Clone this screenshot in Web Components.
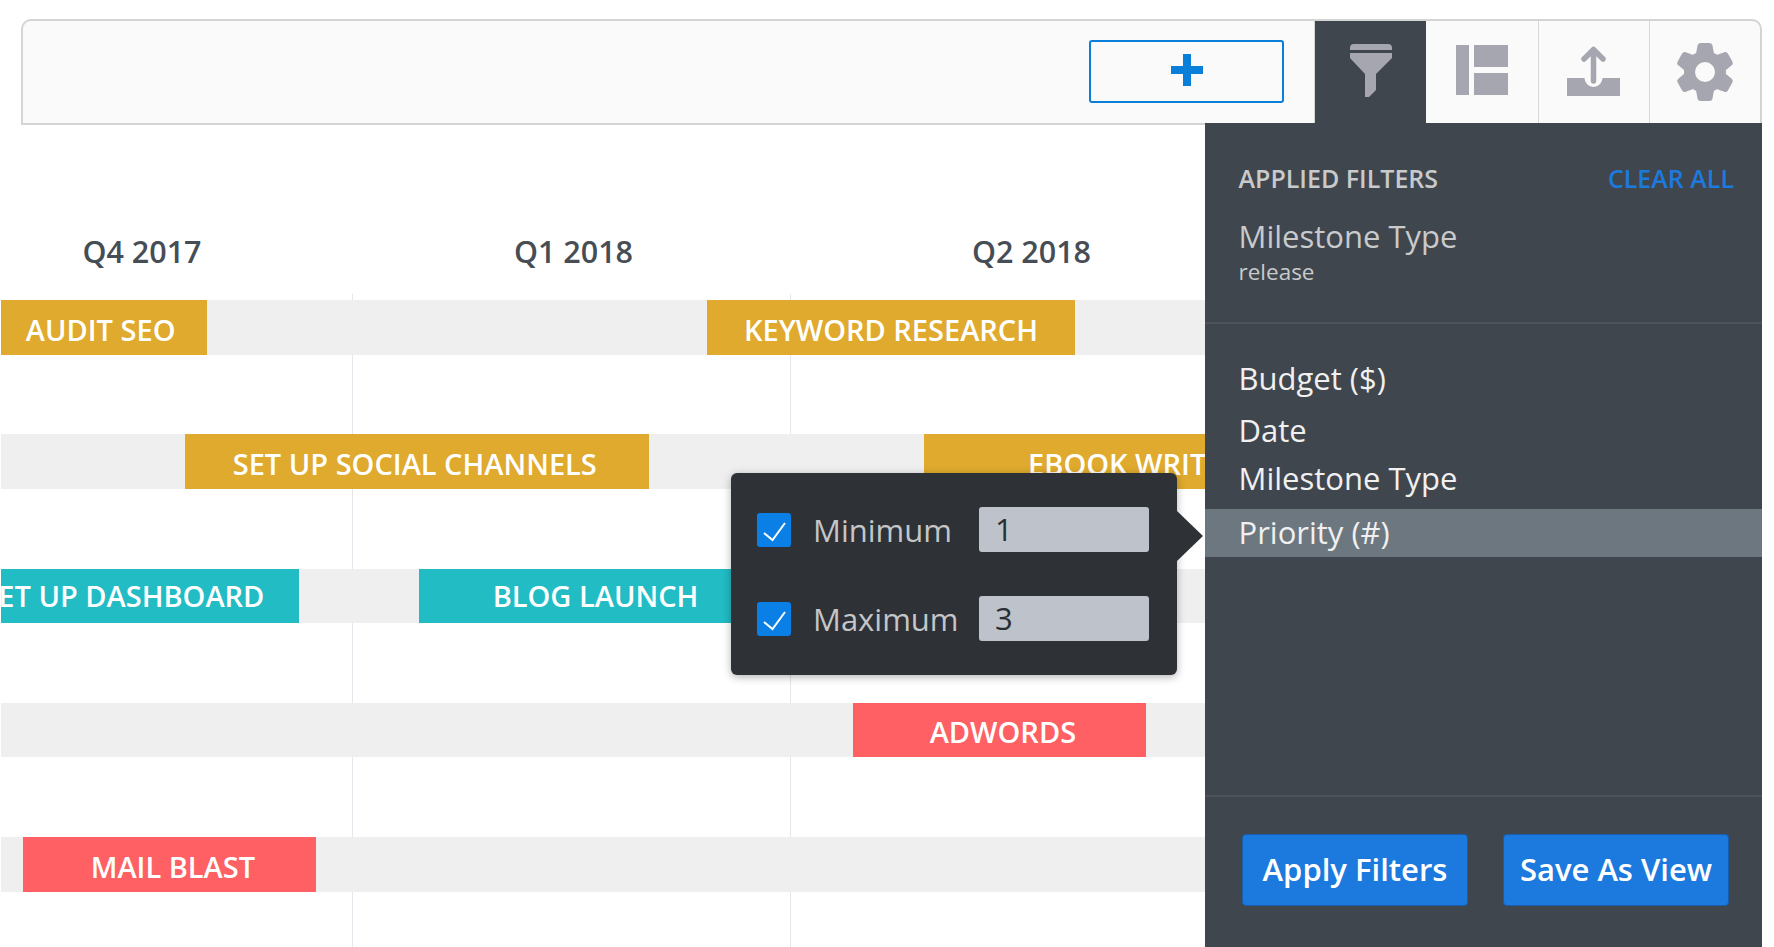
<!DOCTYPE html>
<html>
<head>
<meta charset="utf-8">
<title>Roadmap</title>
<style>
  html, body { margin: 0; height: 100%; background: #fff; overflow: hidden; }
  body { font-family: "Open Sans", sans-serif; }
</style>
</head>
<body>
<roadmap-app>
  <app-toolbar slot="toolbar">
    <tool-tab active style="width:112.25px">
      <svg width="42" height="53" viewBox="0 0 42 53" style="margin-bottom:3px"><path fill="#a6a6b0" d="M0 6V4Q0 0 4 0H38Q42 0 42 4V6ZM0 9H42V14L26 30V46L19 53H15V30L0 14Z"/></svg>
    </tool-tab>
    <tool-tab plain>
      <svg width="52" height="50" viewBox="0 0 52 50" style="margin-bottom:4px"><path fill="#a6a6b0" d="M0 0H13V50H0ZM18 0H52V22H18ZM18 28H52V50H18Z"/></svg>
    </tool-tab>
    <tool-tab>
      <svg width="53" height="50" viewBox="0 0 53 50" style="margin-bottom:2px"><path fill="#a6a6b0" d="M0 32H17.500A9 9 0 0 0 35.500 32H53V50H0Z"/><path fill="none" stroke="#a6a6b0" stroke-width="5.500" stroke-linecap="round" stroke-linejoin="round" d="M26.500 35V4M17 13L26.500 3.500L36 13"/></svg>
    </tool-tab>
    <tool-tab>
      <svg width="60" height="60" viewBox="-30 -30 60 60" style="margin-left:1px">
        <g fill="#a6a6b0">
          <circle r="21"/>
          <path id="t" d="M-9-18L-7.500-26.500Q-7-29-4.500-29H4.500Q7-29 7.500-26.500L9-18Z"/>
          <use href="#t" transform="rotate(60)"/><use href="#t" transform="rotate(120)"/><use href="#t" transform="rotate(180)"/><use href="#t" transform="rotate(240)"/><use href="#t" transform="rotate(300)"/>
        </g>
        <circle r="10" fill="#fafafa"/>
      </svg>
    </tool-tab>
  </app-toolbar>

  <time-line slot="timeline">
    <time-row>
      <time-bar color="#dfaa2d" start="1" end="207" dx="-3" dy="2">AUDIT SEO</time-bar>
      <time-bar color="#dfaa2d" start="707" end="1075" dy="2">KEYWORD RESEARCH</time-bar>
    </time-row>
    <time-row>
      <time-bar color="#dfaa2d" start="185" end="649" dx="-2" dy="2">SET UP SOCIAL CHANNELS</time-bar>
      <time-bar color="#dfaa2d" start="924" end="1363" dy="2">EBOOK WRITING</time-bar>
    </time-row>
    <time-row>
      <time-bar color="#22bcc5" start="-59" end="299" dx="3">SET UP DASHBOARD</time-bar>
      <time-bar color="#22bcc5" start="419" end="772">BLOG LAUNCH</time-bar>
    </time-row>
    <time-row>
      <time-bar color="#fe6063" start="853" end="1146" dx="3" dy="1">ADWORDS</time-bar>
    </time-row>
    <time-row>
      <time-bar color="#fe6063" start="23" end="316" dx="3" dy="2">MAIL BLAST</time-bar>
    </time-row>
    <range-popover slot="over">
      <range-row label="Minimum" value="1"></range-row>
      <range-row label="Maximum" value="3" style="margin-top:44px"></range-row>
    </range-popover>
  </time-line>

  <filter-panel slot="panel">
    <filter-item style="margin-top:30px">Budget ($)</filter-item>
    <filter-item style="margin-top:4px">Date</filter-item>
    <filter-item>Milestone Type</filter-item>
    <filter-item selected style="margin-top:7px">Priority (#)</filter-item>
  </filter-panel>
</roadmap-app>

<script>
class RoadmapApp extends HTMLElement {
  constructor() {
    super();
    this.attachShadow({ mode: "open" }).innerHTML = `
      <style>
        :host { display: flex; flex-direction: column; height: 947px; }
        .body { display: flex; flex: 1; min-height: 0; }
      </style>
      <slot name="toolbar"></slot>
      <div class="body">
        <slot name="timeline"></slot>
        <slot name="panel"></slot>
      </div>`;
  }
}

class AppToolbar extends HTMLElement {
  constructor() {
    super();
    this.attachShadow({ mode: "open" }).innerHTML = `
      <style>
        :host {
          display: flex; box-sizing: border-box; height: 106px; flex: none;
          margin: 19px 12px 0 21px;
          border: 2px solid #d4d4d4; border-radius: 10px 10px 0 0;
          background: #fafafa; justify-content: flex-end;
        }
        .add {
          box-sizing: border-box; width: 195px; height: 63px; margin: 19px 30px 0 0;
          border: 2px solid #0a7fd9; border-radius: 3px;
          display: flex; align-items: center; justify-content: center; padding-bottom: 3px;
        }
      </style>
      <div class="add">
        <svg width="32" height="32" viewBox="0 0 32 32"><path fill="#0a7fd9" d="M12 0H20V12H32V20H20V32H12V20H0V12H12Z"/></svg>
      </div>
      <slot></slot>`;
  }
}

class ToolTab extends HTMLElement {
  constructor() {
    super();
    this.attachShadow({ mode: "open" }).innerHTML = `
      <style>
        :host {
          display: flex; align-items: center; justify-content: center;
          box-sizing: border-box; width: 111.25px; height: 102px;
          border-left: 1px solid #d8d8d8;
        }
        :host([active]) { background: #40464d; border-left-color: #d4d4d4; }
        :host([plain]) { border-left-color: transparent; }
      </style>
      <slot></slot>`;
  }
}

class TimeLine extends HTMLElement {
  constructor() {
    super();
    this.attachShadow({ mode: "open" }).innerHTML = `
      <style>
        :host {
          display: block; position: relative; flex: none; width: 1205px; overflow: hidden;
          background:
            linear-gradient(#e4e6ec, #e4e6ec) 352px 169px / 1px 100% no-repeat,
            linear-gradient(#e4e6ec, #e4e6ec) 790px 169px / 1px 100% no-repeat;
        }
        .quarters {
          display: grid; grid-template-columns: 284px 579px 337px;
          height: 175px; box-sizing: border-box; padding-top: 103px;
          font: 600 30.5px/46px "Open Sans", sans-serif; color: #464d55; text-align: center;
        }
        .rows { display: flex; flex-direction: column; gap: 79.75px; }
        .over { position: absolute; left: 731px; top: 348px; }
      </style>
      <div class="quarters"><div>Q4 2017</div><div>Q1 2018</div><div>Q2 2018</div></div>
      <div class="rows"><slot></slot></div>
      <div class="over"><slot name="over"></slot></div>`;
  }
}

class TimeRow extends HTMLElement {
  constructor() {
    super();
    this.attachShadow({ mode: "open" }).innerHTML = `
      <style>
        :host { display: flex; height: 54.5px; margin-left: 1px; background: #efefef; overflow: hidden; }
      </style>
      <slot></slot>`;
  }
}

class TimeBar extends HTMLElement {
  constructor() {
    super();
    this.attachShadow({ mode: "open" }).innerHTML = `
      <style>
        :host {
          display: flex; flex: none; align-items: center; justify-content: center; box-sizing: border-box;
          font: 600 29px "Open Sans", sans-serif; color: #fff; white-space: nowrap;
        }
      </style>
      <slot></slot>`;
  }
  connectedCallback() {
    // start/end are page x; margin is the distance from the previous bar's end
    const start = +this.getAttribute("start");
    const end = +this.getAttribute("end");
    const dx = +this.getAttribute("dx");
    const dy = +this.getAttribute("dy");
    const prev = this.previousElementSibling;
    const from = prev ? +prev.getAttribute("end") : 1;
    this.style.marginLeft = (start - from) + "px";
    this.style.width = (end - start) + "px";
    this.style.background = this.getAttribute("color");
    if (dx > 0) this.style.paddingLeft = dx * 2.26 + "px";
    if (dx < 0) this.style.paddingRight = -dx * 2.26 + "px";
    if (dy) this.style.paddingTop = dy * 2.26 + "px";
  }
}

class RangePopover extends HTMLElement {
  constructor() {
    super();
    this.attachShadow({ mode: "open" }).innerHTML = `
      <style>
        :host {
          display: block; position: relative; box-sizing: border-box;
          width: 446px; height: 202px; padding: 34px 28px 0 26px;
          background: #2e3236; border-radius: 6px;
          box-shadow: 0 2px 8px rgba(0,0,0,.3);
        }
        .arrow {
          position: absolute; left: 100%; top: 38px; width: 26px; height: 50px;
          background: #2e3236; clip-path: polygon(0 0, 100% 50%, 0 100%);
        }
      </style>
      <slot></slot>
      <div class="arrow"></div>`;
  }
}

class RangeRow extends HTMLElement {
  constructor() {
    super();
    this.attachShadow({ mode: "open" }).innerHTML = `
      <style>
        :host {
          display: grid; grid-template-columns: 34px 188px 170px;
          align-items: center; height: 45px;
          font: 400 31px "Open Sans", sans-serif; color: #c4c6c8;
        }
        .check {
          width: 34px; height: 34px; border-radius: 3px; background: #0a7fe6;
          display: flex;
        }
        .label { padding-left: 22px; }
        .value {
          box-sizing: border-box; height: 45px; padding-left: 16px; line-height: 45px;
          background: #bec3cb; border-radius: 3px; color: #2b2e31; font-weight: 500;
        }
      </style>
      <div class="check"><svg width="34" height="34" viewBox="0 0 34 34"><path fill="none" stroke="#fff" stroke-width="2" d="M7 20L15.500 27L28 10"/></svg></div>
      <div class="label"></div>
      <div class="value"></div>`;
  }
  connectedCallback() {
    this.shadowRoot.querySelector(".label").textContent = this.getAttribute("label");
    this.shadowRoot.querySelector(".value").textContent = this.getAttribute("value");
  }
}

class FilterPanel extends HTMLElement {
  constructor() {
    super();
    this.attachShadow({ mode: "open" }).innerHTML = `
      <style>
        :host {
          display: flex; flex-direction: column; flex: none; box-sizing: border-box;
          width: 557px; margin-top: -2px; background: #40464d; position: relative;
          font-family: "Open Sans", sans-serif;
        }
        .applied { box-sizing: border-box; height: 201px; padding: 37px 28px 0 33.5px; border-bottom: 2px solid #4e5358; }
        .head { display: flex; justify-content: space-between; font-size: 25px; font-weight: 600; line-height: 36px; color: #c8cacc; }
        .clear { color: #1c7ade; }
        .name { margin-top: 20px; font-size: 31px; line-height: 40px; color: #c8cacc; }
        .val { margin-top: 2px; font-size: 22.5px; line-height: 28px; color: #c8cacc; }
        .list { flex: 1; }
        .foot {
          box-sizing: border-box; height: 152px; border-top: 2px solid #4e5358;
          display: flex; gap: 35px; padding: 37px 0 0 37px;
        }
        button {
          box-sizing: border-box; width: 226px; height: 72px; padding: 0 0 2px;
          background: #1c7ade; border: 1.5px solid #175fae; border-radius: 4px; color: #fff;
          font: 600 31px "Open Sans", sans-serif;
        }
      </style>
      <div class="applied">
        <div class="head"><span>APPLIED FILTERS</span><span class="clear">CLEAR ALL</span></div>
        <div class="name">Milestone Type</div>
        <div class="val">release</div>
      </div>
      <div class="list"><slot></slot></div>
      <div class="foot"><button>Apply Filters</button><button>Save As View</button></div>`;
  }
}

class FilterItem extends HTMLElement {
  constructor() {
    super();
    this.attachShadow({ mode: "open" }).innerHTML = `
      <style>
        :host { display: block; height: 48px; padding-left: 33.5px; font-size: 31px; line-height: 48px; color: #f0f0f0; }
        :host([selected]) { background: #6c7780; line-height: 46px; }
      </style>
      <slot></slot>`;
  }
}

customElements.define("roadmap-app", RoadmapApp);
customElements.define("app-toolbar", AppToolbar);
customElements.define("tool-tab", ToolTab);
customElements.define("time-line", TimeLine);
customElements.define("time-row", TimeRow);
customElements.define("time-bar", TimeBar);
customElements.define("range-popover", RangePopover);
customElements.define("range-row", RangeRow);
customElements.define("filter-panel", FilterPanel);
customElements.define("filter-item", FilterItem);
</script>
</body>
</html>
